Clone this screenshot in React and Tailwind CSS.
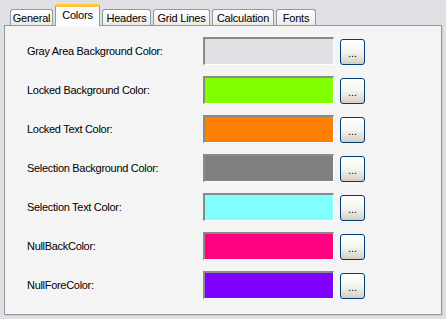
const tabs = [
  { label: "General", w: "w-[43px]" },
  { label: "Colors", w: "w-[45px]", active: true },
  { label: "Headers", w: "w-[49px]" },
  { label: "Grid Lines", w: "w-[57px]" },
  { label: "Calculation", w: "w-[62px]" },
  { label: "Fonts", w: "w-[40px]" },
];

const rows = [
  { label: "Gray Area Background Color:", color: "bg-[#e0dfe3]" },
  { label: "Locked Background Color:", color: "bg-[#80ff00]" },
  { label: "Locked Text Color:", color: "bg-[#ff8000]" },
  { label: "Selection Background Color:", color: "bg-[#808080]" },
  { label: "Selection Text Color:", color: "bg-[#80ffff]" },
  { label: "NullBackColor:", color: "bg-[#ff0080]" },
  { label: "NullForeColor:", color: "bg-[#8000ff]" },
];

function Tab({ label, w, active }) {
  if (active) {
    return (
      <div
        className={`${w} relative z-10 -mb-px flex h-[22px] items-center justify-center rounded-t-[3px] border-x border-t-[3px] border-x-[#919b9c] border-t-[#ffc83c] bg-[#fcfcfe] pb-[2px] text-black`}
      >
        {label}
      </div>
    );
  }
  return (
    <div
      className={`${w} flex h-[16px] items-center justify-center rounded-t-[3px] border border-b-0 border-[#919b9c] bg-gradient-to-b from-white to-[#ecebe6] pt-px text-black`}
    >
      {label}
    </div>
  );
}

function ColorRow({ label, color }) {
  return (
    <div className="flex h-[28px] items-center">
      <span className="w-[176px] tracking-[-0.3px]">{label}</span>
      <div
        className={`h-[28px] w-[131px] border-l-2 border-t-2 border-b border-r border-l-[#8a8a8a] border-t-[#8a8a8a] border-b-white border-r-white ${color}`}
      />
      <button className="ml-[6px] mt-[2px] flex h-[26px] w-[25px] items-center justify-center rounded-[3px] border border-[#003c74] bg-gradient-to-b from-white via-[#f4f4f0] to-[#d6d0c5] pt-[2px] text-[11px] leading-none text-black shadow-[inset_0_-2px_0_#d6d0c5]">
        ...
      </button>
    </div>
  );
}

export default function App() {
  return (
    <div className="h-[319px] w-[446px] bg-[#e0dfe3] pl-[4px] pt-[4px] font-['Liberation_Sans',sans-serif] text-[11px] text-black">
      <div className="flex h-[21px] items-end gap-[2px] pl-[6px] tracking-[-0.2px]">
        {tabs.map((t) => (
          <Tab key={t.label} {...t} />
        ))}
      </div>
      <div className="h-[290px] w-[438px] border border-[#919b9c] bg-[#f4f4f4] shadow-[1px_1px_0_#d0d0bf]">
        <div className="flex flex-col gap-[11px] pl-[22px] pt-[11px]">
          {rows.map((r) => (
            <ColorRow key={r.label} {...r} />
          ))}
        </div>
      </div>
    </div>
  );
}
